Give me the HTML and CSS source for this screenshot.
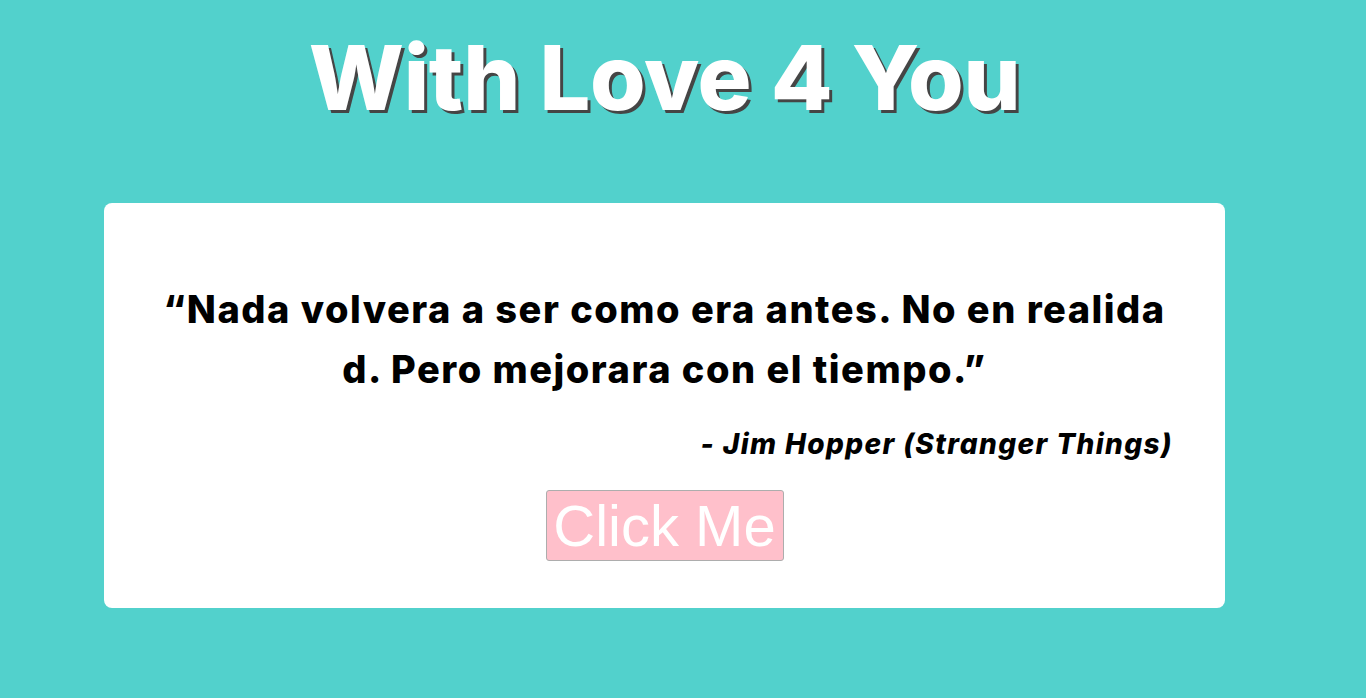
FILE: index.html
```html
<!DOCTYPE html>
<html lang="es">
<head>
<meta charset="utf-8">
<title>With Love 4 You</title>
<link rel="stylesheet" href="styles.css">
</head>
<body>
<main class="page">
  <h1 class="title">With Love 4 You</h1>
  <section class="card">
    <p class="quote">“Nada volvera a ser como era antes. No en realidad. Pero mejorara con el tiempo.”</p>
    <p class="author">- Jim Hopper (Stranger Things)</p>
    <button class="btn" type="button">Click Me</button>
  </section>
</main>
</body>
</html>
```

FILE: styles.css
```css
html, body {
  margin: 0;
  padding: 0;
}
body {
  background: #52d1cc;
  font-family: Inter, "Noto Sans", sans-serif;
  height: 698px;
  overflow: hidden;
}
.page {
  width: 1121px;
  margin-left: 104px;
  display: flex;
  flex-direction: column;
}
.title {
  margin: 0;
  padding-top: 23px;
  font-size: 90px;
  line-height: 110px;
  font-weight: 800;
  color: #fff;
  text-align: center;
  text-shadow: 3px 3px 0 #454545;
  letter-spacing: -0.3px;
}
.card {
  margin-top: 70px;
  background: #fff;
  border-radius: 8px;
  padding: 76px 52px 47px;
  display: flex;
  flex-direction: column;
  align-items: center;
}
.quote {
  margin: 0;
  width: 100%;
  font-size: 38px;
  line-height: 60px;
  font-weight: 800;
  letter-spacing: 1.5px;
  color: #000;
  text-align: center;
  word-break: break-all;
}
.author {
  margin: 30px 0 0;
  align-self: stretch;
  text-align: right;
  font-size: 28px;
  line-height: 30px;
  font-weight: 800;
  font-style: italic;
  letter-spacing: 1.4px;
  color: #000;
}
.btn {
  margin-top: 31px;
  width: 238px;
  height: 71px;
  padding: 0;
  background: #ffc0cb;
  color: #fff;
  border: 1px solid #adadad;
  border-radius: 3px;
  font-family: "Liberation Sans", Arial, sans-serif;
  font-size: 58px;
  line-height: 67px;
}
```
